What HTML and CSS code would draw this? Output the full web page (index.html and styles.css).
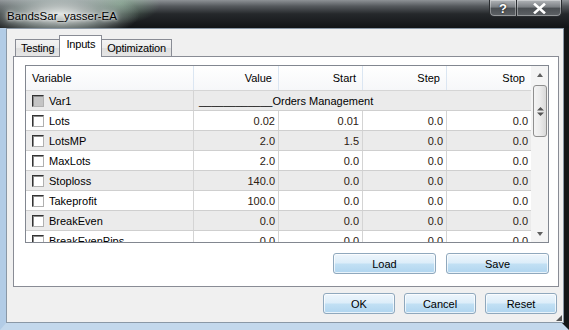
FILE: index.html
```html
<!DOCTYPE html>
<html lang="en">
<head>
    <meta charset="UTF-8">
    <title>BandsSar_yasser-EA</title>
    <link rel="stylesheet" href="styles.css">
</head>
<body>
    <div class="window">
        <div class="titlebar">
            <span class="title">BandsSar_yasser-EA</span>
            <div class="caption-buttons">
                <span class="cap-btn help">?</span>
                <span class="cap-btn close">
                    <svg width="13" height="11" viewBox="0 0 13 11"><path d="M2 1.5 L11 9.5 M11 1.5 L2 9.5" stroke="#fff" stroke-width="2.6" stroke-linecap="square"/></svg>
                </span>
            </div>
        </div>

        <div class="frame">
            <div class="client">
                <!-- zakładki -->
                <div class="tabs">
                    <span class="tab">Testing</span>
                    <span class="tab active">Inputs</span>
                    <span class="tab">Optimization</span>
                </div>

                <div class="panel">
                    <div class="grid">
                        <div class="grid-body">
                            <div class="row head">
                                <div class="cell name">Variable</div>
                                <div class="cell num">Value</div>
                                <div class="cell num">Start</div>
                                <div class="cell num">Step</div>
                                <div class="cell num last">Stop</div>
                            </div>
                            <div class="row odd">
                                <div class="cell name"><span class="check disabled"></span>Var1</div>
                                <div class="cell merged">____________Orders Management</div>
                            </div>
                            <div class="row">
                                <div class="cell name"><span class="check"></span>Lots</div>
                                <div class="cell num">0.02</div>
                                <div class="cell num">0.01</div>
                                <div class="cell num">0.0</div>
                                <div class="cell num last">0.0</div>
                            </div>
                            <div class="row odd">
                                <div class="cell name"><span class="check"></span>LotsMP</div>
                                <div class="cell num">2.0</div>
                                <div class="cell num">1.5</div>
                                <div class="cell num">0.0</div>
                                <div class="cell num last">0.0</div>
                            </div>
                            <div class="row">
                                <div class="cell name"><span class="check"></span>MaxLots</div>
                                <div class="cell num">2.0</div>
                                <div class="cell num">0.0</div>
                                <div class="cell num">0.0</div>
                                <div class="cell num last">0.0</div>
                            </div>
                            <div class="row odd">
                                <div class="cell name"><span class="check"></span>Stoploss</div>
                                <div class="cell num">140.0</div>
                                <div class="cell num">0.0</div>
                                <div class="cell num">0.0</div>
                                <div class="cell num last">0.0</div>
                            </div>
                            <div class="row">
                                <div class="cell name"><span class="check"></span>Takeprofit</div>
                                <div class="cell num">100.0</div>
                                <div class="cell num">0.0</div>
                                <div class="cell num">0.0</div>
                                <div class="cell num last">0.0</div>
                            </div>
                            <div class="row odd">
                                <div class="cell name"><span class="check"></span>BreakEven</div>
                                <div class="cell num">0.0</div>
                                <div class="cell num">0.0</div>
                                <div class="cell num">0.0</div>
                                <div class="cell num last">0.0</div>
                            </div>
                            <div class="row">
                                <div class="cell name"><span class="check"></span>BreakEvenPips</div>
                                <div class="cell num">0.0</div>
                                <div class="cell num">0.0</div>
                                <div class="cell num">0.0</div>
                                <div class="cell num last">0.0</div>
                            </div>
                        </div>

                        <!-- pasek przewijania -->
                        <div class="scrollbar">
                            <div class="arrow up"></div>
                            <div class="track">
                                <div class="thumb">
                                    <svg width="7" height="9" viewBox="0 0 7 9"><path d="M3.5 0 L7 3.5 L0 3.5 Z M0 5.5 L7 5.5 L3.5 9 Z" fill="#555"/></svg>
                                </div>
                            </div>
                            <div class="arrow down"></div>
                        </div>
                    </div>

                    <div class="panel-buttons">
                        <button class="btn wide">Load</button>
                        <button class="btn wide">Save</button>
                    </div>
                </div>

                <div class="dialog-buttons">
                    <button class="btn">OK</button>
                    <button class="btn">Cancel</button>
                    <button class="btn">Reset</button>
                </div>

                <span class="grip"></span>
            </div>
        </div>
    </div>
</body>
</html>
```

FILE: styles.css
```css
body {
    margin: 0;
    background: #111;
    font-family: "Liberation Sans", Arial, sans-serif;
    font-size: 11px;
    color: #000;
}

.window {
    width: 569px;
    height: 330px;
    display: flex;
    flex-direction: column;
    overflow: hidden;
}

.titlebar {
    height: 28px;
    display: flex;
    justify-content: space-between;
    align-items: flex-start;
    background:
        radial-gradient(ellipse 80px 26px at 60px 14px, rgba(238, 242, 240, 0.95) 0%, rgba(190, 205, 200, 0.55) 55%, rgba(90, 100, 100, 0) 100%),
        radial-gradient(ellipse 40px 20px at 120px 4px, rgba(150, 200, 160, 0.5) 0%, rgba(150, 200, 160, 0) 100%),
        linear-gradient(to bottom, #8e9296 0%, #55595d 22%, #25282b 50%, #121416 100%);
}

.title {
    padding: 10px 0 0 7px;
    font-size: 11.5px;
    color: #000;
    text-shadow: 0 0 6px #fff, 0 0 3px #fff;
}

.caption-buttons {
    display: flex;
    margin-right: 7px;
}

.cap-btn {
    height: 16px;
    display: flex;
    align-items: center;
    justify-content: center;
    border: 1px solid #2a2d30;
    border-top: none;
    box-shadow: inset 0 0 0 1px rgba(255, 255, 255, 0.35);
    background: linear-gradient(to bottom, #b2b5b8 0%, #7a7e82 45%, #4a4e52 50%, #5e6266 100%);
    color: #fff;
    font-weight: bold;
    font-size: 13px;
    text-shadow: 0 0 2px #000;
}

.cap-btn.help {
    width: 26px;
    border-radius: 0 0 0 5px;
}

.cap-btn.close {
    width: 44px;
    border-left: none;
    border-radius: 0 0 5px 0;
}

.frame {
    flex: 1;
    display: flex;
    border-left: 6px solid #b2cce6;
    border-right: 7px solid #141718;
    border-bottom: 7px solid #c3d8ec;
}

.client {
    flex: 1;
    position: relative;
    background: #f0f0f0;
    border: 1px solid #8a98a6;
    padding: 6px 4px 0 6px;
}

/* zakładki */
.tabs {
    display: flex;
    align-items: flex-end;
    height: 21px;
    margin-left: 2px;
}

.tab {
    height: 16px;
    padding: 0 5px;
    line-height: 17px;
    letter-spacing: -0.2px;
    border: 1px solid #898c95;
    border-bottom: none;
    background: linear-gradient(to bottom, #f3f3f3 0%, #ebebeb 50%, #dedede 51%, #e5e5e5 100%);
}

.tab + .tab {
    border-left: none;
}

.tab.active {
    position: relative;
    z-index: 1;
    height: 21px;
    margin-bottom: -1px;
    margin-left: -1px;
    padding: 0 6px;
    line-height: 17px;
    background: #fff;
    border-left: 1px solid #898c95;
    border-right: 1px solid #898c95;
}

.tab.active + .tab {
    border-left: none;
}

.panel {
    width: 546px;
    height: 231px;
    box-sizing: border-box;
    border: 1px solid #898c95;
    background: #fff;
    padding: 8px 8px 0 11px;
}

/* siatka parametrów */
.grid {
    width: 524px;
    height: 178px;
    box-sizing: border-box;
    border: 1px solid #828790;
    display: flex;
    background: #fff;
}

.grid-body {
    width: 505px;
    overflow: hidden;
}

.row {
    display: flex;
    height: 20px;
    box-sizing: border-box;
    border-bottom: 1px solid #cfcfcf;
    background: #fff;
}

.row.odd {
    background: #ebebeb;
}

.row.head {
    height: 25px;
    border-bottom: 1px solid #d5d5d5;
    background: linear-gradient(to bottom, #ffffff 0%, #f6f7f9 100%);
}

.cell {
    box-sizing: border-box;
    display: flex;
    align-items: center;
    border-right: 1px solid #d4d4d4;
    white-space: nowrap;
}

.cell.name {
    width: 168px;
    padding-left: 6px;
}

.cell.num {
    width: 84px;
    justify-content: flex-end;
    padding-right: 3px;
    color: #2b2012;
}

.cell.num:nth-child(2) {
    width: 85px;
}

.cell.last {
    border-right: none;
}

.row.head .cell {
    border-right: 1px solid #dbe6f2;
    padding-right: 6px;
    color: #000;
}

.row.head .cell.last {
    border-right: none;
}

.cell.merged {
    width: 337px;
    padding-left: 5px;
    border-right: none;
}

.check {
    width: 12px;
    height: 12px;
    box-sizing: border-box;
    margin-right: 5px;
    border: 1px solid;
    border-color: #333 #b0b0b0 #b0b0b0 #333;
    box-shadow: inset 1px 1px 0 #8a8a8a;
    background: #fff;
}

.check.disabled {
    background: #c4c4c4;
}

.scrollbar {
    width: 17px;
    display: flex;
    flex-direction: column;
    background: #f4f4f4;
}

.arrow {
    height: 17px;
    display: flex;
    align-items: center;
    justify-content: center;
}

.arrow::before {
    content: "";
    border-left: 3.5px solid transparent;
    border-right: 3.5px solid transparent;
}

.arrow.up::before {
    border-bottom: 4px solid #606060;
}

.arrow.down::before {
    border-top: 4px solid #606060;
}

.track {
    flex: 1;
}

.thumb {
    height: 52px;
    margin: 2px 1px 0 2px;
    box-sizing: border-box;
    border: 1px solid #8f8f8f;
    border-radius: 3px;
    background: linear-gradient(to right, #f4f4f4 0%, #ebebeb 50%, #d9d9d9 100%);
    display: flex;
    align-items: center;
    justify-content: center;
}

/* przyciski */
.btn {
    height: 21px;
    padding: 0;
    font-family: "Liberation Sans", Arial, sans-serif;
    font-size: 11px;
    color: #000;
    border: 1px solid #8fa8bd;
    border-radius: 3px;
    box-shadow: inset 0 0 0 1px rgba(255, 255, 255, 0.7);
    background: linear-gradient(to bottom, #eef6fc 0%, #dcedf9 48%, #c2e0f4 52%, #b0d5ef 100%);
    width: 72px;
}

.btn.wide {
    width: 103px;
}

.panel-buttons {
    display: flex;
    justify-content: flex-end;
    gap: 10px;
    margin-top: 10px;
    padding-right: 1px;
}

.dialog-buttons {
    display: flex;
    justify-content: flex-end;
    gap: 9px;
    margin-top: 6px;
    padding-right: 2px;
}

.grip {
    position: absolute;
    right: 1px;
    bottom: 1px;
    width: 0;
    height: 0;
    border-left: 6px solid transparent;
    border-bottom: 6px solid #555;
}
```
